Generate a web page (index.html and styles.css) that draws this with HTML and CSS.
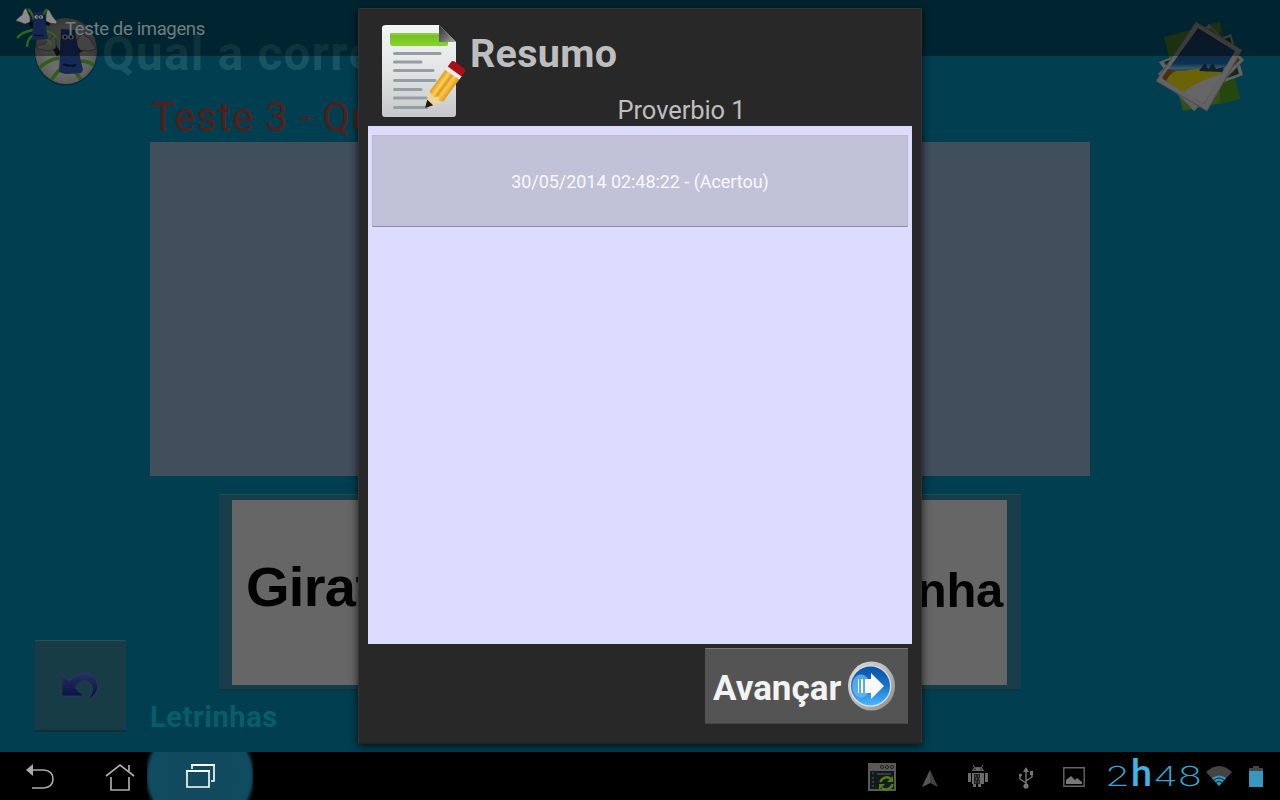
FILE: index.html
```html
<!DOCTYPE html>
<html lang="pt">
<head>
<meta charset="utf-8">
<title>Teste de imagens</title>
<link rel="stylesheet" href="styles.css">
</head>
<body>
<div class="screen">
  <main class="game">
    <header class="game-header">
      <svg class="avatar" viewBox="0 0 64 68">
        <defs>
          <radialGradient id="disc"><stop offset=".65" stop-color="#6c6c6a"/><stop offset="1" stop-color="#5b5d5b"/></radialGradient>
          <clipPath id="disc-clip"><ellipse cx="32" cy="33" rx="31" ry="33"/></clipPath>
        </defs>
        <ellipse cx="32" cy="34.5" rx="31.5" ry="33.3" fill="#022e38"/>
        <ellipse cx="32" cy="33" rx="31" ry="33" fill="url(#disc)"/>
        <g clip-path="url(#disc-clip)">
          <path d="M25 40Q12 42 1 54M27 50Q21 56 15 66M47 43Q56 43 64 50M41 53L49 65" fill="none" stroke="#315d19" stroke-width="3.4"/>
          <path d="M25 37L20 28M47 34L42 27" stroke="#11191f" stroke-width="5"/>
          <path d="M2 28L10 26 20 17 22 22 22 30 16 33 4 31zM62 31L56 21 49 16 45 19 41 25 46 32 54 33z" fill="#707070" stroke="#3c3c3c" stroke-width=".8"/>
        </g>
        <path d="M27 11L41 12 44 30 49 52 47 55Q36 56 31 56L25 54z" fill="#172a55"/>
        <ellipse cx="31" cy="19" rx="3" ry="2.500" fill="#777"/><ellipse cx="37" cy="19" rx="3" ry="2.500" fill="#777"/>
        <circle cx="31" cy="19" r="1.200"/><circle cx="37" cy="19" r="1.200"/>
        <path d="M29 46Q35 49 42 47" fill="none" stroke="#080e25" stroke-width="2"/>
      </svg>
      <h1 class="game-title">Qual a corre</h1>
      <svg class="photos" viewBox="0 0 90 94">
        <defs>
          <linearGradient id="sky" x2="0" y2="1"><stop stop-color="#132638"/><stop offset=".35" stop-color="#0c2b46"/><stop offset=".47" stop-color="#0d3350"/><stop offset=".53" stop-color="#355b70"/><stop offset=".59" stop-color="#18222c"/></linearGradient>
        </defs>
        <path d="M8 17L64 2 84 79 27 91z" fill="#315019"/>
        <path d="M64 2L72 32 84 79 64 84z" fill="#25460f"/>
        <path d="M3 42L75 14 87 55 28 77z" fill="#636363"/>
        <path d="M8 42L74 17 83 54 28 72z" fill="#182719"/>
        <path d="M2 54L53 4 88 40 38 91z" fill="#616161" stroke="#425154"/>
        <path d="M7 55L55 8 84 40 39 83z" fill="#4b321a"/>
        <path d="M0 61L40 2 86 30 51 91z" fill="#636363" stroke="#444b4e"/>
        <path d="M6 58L42 8 79 31 48 84z" fill="url(#sky)"/>
        <path d="M12 50Q25 52 41 49 53 50 67 51L61 61Q42 65 27 72L6 58z" fill="#6b6308"/>
        <path d="M12 49L6 58 10 61Q14 53 20 51z" fill="#4d2d18"/>
        <path d="M27 72Q42 61 66 54L48 84z" fill="#666"/>
        <path d="M43 51L49 43 52 49 57 43 60 49 68 47 66 52z" fill="#10202b"/>
      </svg>
    </header>
    <h2 class="question">Teste 3 - Qu</h2>
    <div class="picture"></div>
    <div class="answer"><div class="answer-image"><span class="answer-start">Giraf</span><span class="answer-end">nha</span></div></div>
    <footer class="game-footer">
      <div class="undo">
        <svg width="38" height="30" viewBox="0 0 38 30">
          <defs><linearGradient id="undo-blue" x2="0" y2="1"><stop stop-color="#25325f"/><stop offset="1" stop-color="#070c42"/></linearGradient></defs>
          <path d="M0 2L7 9Q14 1 23 1 36 3 36 15 35 23 26 28 32 20 30 14 26 7 19 10 15 12 13 16L22 24H0z" fill="url(#undo-blue)" stroke="#263b5a"/>
        </svg>
      </div>
      <strong class="brand">Letrinhas</strong>
    </footer>
  </main>

  <div class="action-bar">
    <svg class="app-icon" viewBox="0 0 42 42">
      <path d="M12 2C16 5 17 9 18 13M31 2C28 5 26 9 24 14M17 23C11 24 5 26 1 31M17 28C13 31 11 35 11 40M31 24Q38 26 40 31M30 31Q33 34 35 38" fill="none" stroke="#35621c" stroke-width="2.3"/>
      <path d="M17 20L14 15M31 18L33 15" stroke="#080b12" stroke-width="4"/>
      <path d="M1 12L6 8 8 3 10 1 12 6 14 10 14 15 9 17 4 15 0 14zM41 15L37 10 33 3 31 3 30 8 30 14 34 16 40 17z" fill="#8b8b8b" stroke="#333" stroke-width=".6"/>
      <path d="M18 5L27 5 32 32 16 33z" fill="#152750"/>
      <ellipse cx="20.5" cy="10" rx="2" ry="1.7" fill="#999"/><ellipse cx="25" cy="10" rx="2" ry="1.7" fill="#999"/>
      <circle cx="21" cy="10" r=".8"/><circle cx="24.7" cy="10" r=".8"/>
      <path d="M18 28Q23 29 28 28" fill="none" stroke="#050a20"/>
    </svg>
    <span class="app-name">Teste de imagens</span>
  </div>

  <section class="dialog">
    <header class="dialog-header">
      <svg class="report" width="84" height="94" viewBox="0 0 84 94">
        <defs>
          <linearGradient id="paper" x2="0" y2="1"><stop stop-color="#f4f5f5"/><stop offset=".5" stop-color="#e3e4e4"/><stop offset="1" stop-color="#c6c7c8"/></linearGradient>
          <linearGradient id="fold" x2="1" y2="1"><stop stop-color="#333"/><stop offset=".5" stop-color="#666"/><stop offset="1" stop-color="#aaa"/></linearGradient>
          <linearGradient id="green" x2="0" y2="1"><stop stop-color="#71bd20"/><stop offset="1" stop-color="#86d32c"/></linearGradient>
          <linearGradient id="pencil"><stop stop-color="#d99d21"/><stop offset=".3" stop-color="#ffcf54"/><stop offset=".5" stop-color="#d99924"/><stop offset=".65" stop-color="#ffc94c"/><stop offset="1" stop-color="#d99924"/></linearGradient>
        </defs>
        <path d="M4 1H57L74 18V90Q74 93 71 93H3Q0 93 0 90V4Q0 1 4 1z" fill="url(#paper)"/>
        <path d="M57 1L74 18H57z" fill="url(#fold)"/>
        <path d="M9 9H57V18H66V20Q66 22 63 22H11Q8 22 8 19V11Q8 9 9 9z" fill="url(#green)"/>
        <path d="M9 10H57" stroke="#acd867"/>
        <path d="M12.5 29.5H58M12.5 38H39M12.5 46.5H51M12.5 56.5H53M12.5 65.5H39M12.5 74H44M12.5 83.5H45" stroke="#929fa5" stroke-width="3" stroke-linecap="round"/>
        <g transform="translate(43 84) rotate(36)">
          <path d="M0 0L-6-16H10z" fill="#f0d498"/><path d="M0 0L-3-8 5-7z" fill="#171717"/>
          <path d="M-6-16V-43H11V-16L7-14 4-17 0-14z" fill="url(#pencil)"/>
          <path d="M-6-43H11V-48H-6z" fill="#eeeae6"/>
          <path d="M-6-47V-52Q-6-55-3-55H8Q11-55 11-52V-47z" fill="#a90f18"/>
        </g>
      </svg>
      <h2 class="dialog-title">Resumo</h2>
    </header>
    <p class="dialog-subtitle">Proverbio 1</p>
    <div class="results"><button class="result">30/05/2014 02:48:22 - (Acertou)</button></div>
    <div class="dialog-actions">
      <button class="next"><span class="next-label">Avançar</span>
        <svg width="48" height="50" viewBox="0 0 48 50">
          <defs>
            <linearGradient id="ring" x2="1" y2="1"><stop stop-color="#ddd"/><stop offset=".5" stop-color="#b9b9b9"/><stop offset="1" stop-color="#8a8a8a"/></linearGradient>
            <linearGradient id="blue" x2="0" y2="1"><stop stop-color="#0754a6"/><stop offset=".5" stop-color="#1b73cc"/><stop offset="1" stop-color="#49b8ff"/></linearGradient>
          </defs>
          <ellipse cx="23.5" cy="25" rx="23.5" ry="24.5" fill="url(#ring)"/><circle cx="22.5" cy="25" r="20.8" fill="#ddd"/><circle cx="22.5" cy="25" r="19.5" fill="url(#blue)"/>
          <ellipse cx="13" cy="25" rx="9" ry="11.5" fill="#6cb9f4" opacity=".75"/>
          <path d="M10 18h1v14h-1zM13 18h2v14h-2zM17 18h6v-6l13 13-13 13v-6h-6z" fill="#f8f8f8"/>
        </svg>
      </button>
    </div>
  </section>

  <nav class="system-bar">
    <div class="nav-keys">
      <div class="key"><svg width="28" height="26" viewBox="0 0 28 26"><path d="M6 6H18Q27 7 27 15T18 24H6" fill="none" stroke="#aaa" stroke-width="1.6"/><path d="M0 6L7 0V12z" fill="#aaa"/></svg></div>
      <div class="key"><svg width="30" height="28" viewBox="0 0 30 28"><path d="M1 13L15 2 29 13M6 14V27H24V14M24 8V2" fill="none" stroke="#aaa" stroke-width="1.7"/></svg></div>
      <div class="key recent"><svg width="30" height="25" viewBox="0 0 30 25"><path d="M1 7H23V23H1zM6 5V1H28V17H25" fill="none" stroke="#fff" stroke-width="1.6"/><path d="M0 7H24M5 1H29" stroke="#fff" stroke-width="2"/></svg></div>
    </div>
    <div class="status">
      <svg class="sync" width="28" height="28" viewBox="0 0 28 28"><path d="M0 0H28V28H0z" fill="#595959"/><path d="M2 8H26V26H2z" fill="#111a1c"/><g fill="none" stroke="#222"><circle cx="14" cy="4" r="1.6"/><circle cx="19" cy="4" r="1.6"/><circle cx="24" cy="4" r="1.6"/></g><path d="M4 10h2M4 15h2M4 19h2M4 23h2M9 11h14" stroke="#536064"/><path d="M12.500 19A6.500 6.500 0 0 1 23 16M24.500 21A6.500 6.500 0 0 1 14 25" fill="none" stroke="#557f12" stroke-width="2.5"/><path d="M25 13V19H19zM11 27V21H17z" fill="#557f12"/></svg>
      <svg class="locate" width="16" height="18" viewBox="0 0 16 18"><path d="M8 0L0 17 8 13 16 17z" fill="#424242"/><path d="M8 0V13L0 17z" fill="#555"/></svg>
      <svg class="debug" width="20" height="24" viewBox="0 0 20 24"><path d="M4 6Q5 2 10 2T16 6zM0 8H3V17H0zM17 8H20V17H17zM4 8H16V19H13V22H10V19H8V22H5V19H4z" fill="#6b6b6b"/><path d="M5 0L7 3M15 0L13 3" stroke="#6b6b6b"/><path d="M6 9H12V19H6z" fill="#222"/><path d="M7 11h1M10 11h1M8 14h1M11 14h1M7 17h1M10 17h1" stroke="#777"/><circle cx="7" cy="4.5" r=".7"/><circle cx="13" cy="4.5" r=".7"/></svg>
      <svg class="usb" width="14" height="22" viewBox="0 0 14 22"><path d="M7 2V20M7 16L1 12V7M7 14L13 10V6" fill="none" stroke="#777" stroke-width="1.4"/><path d="M7 0L4 5H10zM11 4H14V8H11z" fill="#777"/><circle cx="7" cy="19" r="2.6" fill="#777"/><circle cx="1.5" cy="8" r="1.5" fill="#777"/></svg>
      <svg class="gallery" width="22" height="20" viewBox="0 0 22 20"><path d="M.8.8H21.2V19.2H.8z" fill="none" stroke="#666" stroke-width="1.4"/><path d="M3 17V13L8 9 12 13 14 11 19 15V17z" fill="#777"/></svg>
      <svg class="clock" width="96" height="48" viewBox="0 0 96 48">
        <text class="thin-digit" x="-2" y="34" textLength="25" lengthAdjust="spacingAndGlyphs">2</text>
        <text class="hour-mark" x="24" y="34" textLength="21" lengthAdjust="spacingAndGlyphs">h</text>
        <text class="thin-digit" x="46" y="34" textLength="49" lengthAdjust="spacingAndGlyphs">48</text>
      </svg>
      <svg class="wifi" width="26" height="20" viewBox="0 0 26 20"><path d="M0 6Q13-6 26 6L13 20z" fill="#444"/><path d="M6 12Q13 7 20 12L13 20z" fill="#3697bd"/><path d="M8 14Q13 10 18 14M10 16.500Q13 14 16 16.500" fill="none" stroke="#10242c"/></svg>
      <svg class="battery" width="14" height="21" viewBox="0 0 14 21"><path d="M4 0H10V2H14V6H0V2H4z" fill="#444"/><path d="M0 5H14V21H0z" fill="#3797bd"/></svg>
    </div>
  </nav>
</div>
</body>
</html>
```
FILE: styles.css
```css
* { box-sizing: border-box; }
body { margin: 0; background: #000; font-family: Roboto, "Noto Sans", sans-serif; }
h1, h2, p { margin: 0; }
button { border: 0; padding: 0; font: inherit; }
svg { display: block; flex: none; }
.screen { position: relative; width: 1280px; height: 800px; overflow: hidden; display: flex; flex-direction: column; }

.game { height: 752px; background: #003e50; }
.game-header { display: flex; height: 98px; padding: 18px 34px 0; align-items: flex-start; }
.avatar { width: 64px; height: 68px; }
.game-title { margin: 10px 0 0 4px; font-size: 47.5px; line-height: 52px; font-weight: 700; color: #185563; letter-spacing: 1.3px; white-space: pre; }
.photos { width: 90px; height: 94px; margin: 2px 0 0 auto; }
.question { height: 44px; padding-left: 151px; font-size: 40px; line-height: 40px; font-weight: 400; color: #541f18; letter-spacing: 1px; white-space: pre; }
.picture { width: 940px; height: 334px; margin-left: 150px; background: #414f5d; }
.answer { width: 802px; height: 197px; margin: 18px 0 0 219px; padding: 5px 14px 6px 13px; background: #173e48; border-top: 1px solid #244b55; border-bottom: 2px solid #0d3541; }
.answer-image { display: flex; justify-content: space-between; align-items: flex-start; height: 185px; padding: 57px 4px 0 14px; background: #666; color: #020202; font: 700 56px/60px "Liberation Sans", Arial, sans-serif; }
.answer-start { letter-spacing: -.7px; }
.answer-end { font-size: 49px; line-height: 66px; letter-spacing: -.3px; }
.game-footer { display: flex; margin-top: -51px; padding-left: 35px; }
.undo { display: grid; place-items: center; width: 91px; height: 92px; padding-top: 3px; background: #183c46; border-top: 1px solid #28505a; border-bottom: 2px solid #0c303b; }
.brand { margin: 59px 0 0 24px; font-size: 29px; line-height: 36px; color: #075e6b; letter-spacing: .6px; }

.action-bar { position: absolute; inset: 0 0 auto; height: 56px; display: flex; padding: 7px 16px 0; background: rgba(0, 0, 0, .4); }
.app-icon { width: 42px; height: 42px; }
.app-name { margin-left: 7px; font-size: 18.5px; line-height: 45px; letter-spacing: -.35px; color: #737d80; }

.dialog { position: absolute; left: 358px; top: 8px; width: 564px; height: 736px; padding: 0 9px; background: #282828; border: 1px solid #333; border-bottom-color: #202020; border-radius: 2px; box-shadow: 0 2px 8px rgba(0, 0, 0, .75); }
.dialog-header { display: flex; height: 85px; padding: 15px 0 0 14px; }
.dialog-title { margin: 6px 0 0 4px; font-size: 39.5px; line-height: 48px; color: #bebebe; letter-spacing: .3px; }
.dialog-subtitle { height: 32px; padding-left: 83px; text-align: center; font-size: 25.5px; line-height: 33px; letter-spacing: -.1px; color: #bebebe; }
.results { height: 518px; padding: 9px 4px; background: #dcdcff; }
.result { display: block; width: 536px; height: 92px; background: #c1c1d7; border: 1px solid #b9b9cf; border-bottom-color: #8e8e9d; color: #f8f8fc; font-size: 18px; letter-spacing: -.05px; }
.dialog-actions { display: flex; justify-content: flex-end; padding: 4px 4px 0; }
.next { display: flex; align-items: center; width: 203px; height: 76px; padding: 0 7px 0 8px; gap: 7px; background: #545454; border-top: 1px solid #777; border-bottom: 1px solid #444; color: #f3f3f3; font-size: 35px; font-weight: 700; }
.next-label { padding-top: 4px; }

.system-bar { display: flex; justify-content: space-between; height: 48px; background: #000; }
.nav-keys { display: flex; }
.key { display: grid; place-items: center; width: 80px; height: 48px; padding-top: 1px; }
.recent { width: 106px; margin-left: -13px; padding: 0 0 0 1px; background: radial-gradient(circle 56px at 53px 24px, #12495d 0, #104b60 51px, #06303e 53px, #000 100%); }
.status { display: flex; }
.sync { margin: 11px 0 0; }
.locate { margin: 18px 0 0 26px; }
.debug { margin: 13px 0 0 30px; }
.usb { margin: 15px 0 0 31px; }
.gallery { margin: 15px 0 0 30px; }
.clock { margin: 0 0 0 22px; }
.wifi { margin: 14px 0 0 3px; }
.battery { margin: 14px 17px 0 17px; }
.thin-digit { fill: #3ca4ce; font: 200 27.5px Inter, sans-serif; }
.hour-mark { fill: #3eb4e3; font: 500 37px Roboto, sans-serif; }
```
